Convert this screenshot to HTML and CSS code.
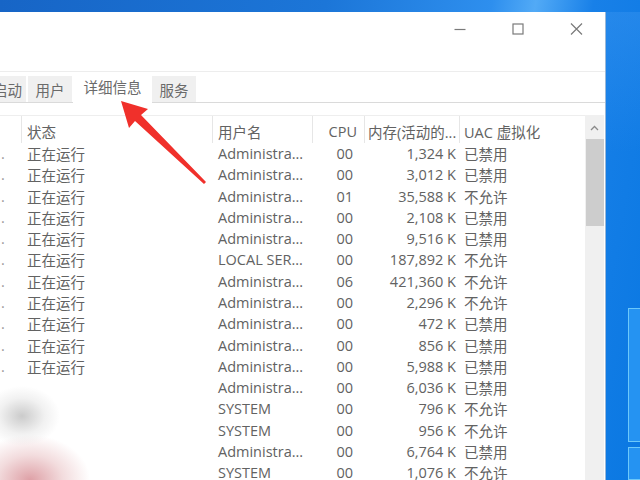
FILE: index.html
```html
<!DOCTYPE html>
<html lang="zh-CN">
<head>
<meta charset="utf-8">
<title>任务管理器 - 详细信息</title>
<link rel="stylesheet" href="styles.css">
</head>
<body>
<div class="desk">
  <div class="window">
    <div class="titlebar">
      <div class="wbtn"><svg width="12" height="12" viewBox="0 0 12 12"><path d="M0.5 6.5H11.5" stroke="#7a7a7a" stroke-width="1.2"/></svg></div>
      <div class="wbtn"><svg width="12" height="12" viewBox="0 0 12 12"><rect x="1" y="1" width="10" height="10" fill="none" stroke="#7a7a7a" stroke-width="1.2"/></svg></div>
      <div class="wbtn"><svg width="13" height="12" viewBox="0 0 13 12"><path d="M1 0.5L12 11.5M12 0.5L1 11.5" stroke="#7a7a7a" stroke-width="1.2"/></svg></div>
    </div>
    <div class="menubar"></div>
    <div class="tabs">
      <div class="tab cut">启动</div>
      <div class="tab">用户</div>
      <div class="tab active">详细信息</div>
      <div class="tab">服务</div>
    </div>
    <div class="content">
      <div class="table">
        <div class="row head">
          <div class="c name"></div>
          <div class="c st">状态</div>
          <div class="c us">用户名</div>
          <div class="c cpu">CPU</div>
          <div class="c mem">内存(活动的...</div>
          <div class="c uac">UAC 虚拟化</div>
        </div>
        <div class="row"><div class="c name">.</div><div class="c st">正在运行</div><div class="c us">Administra...</div><div class="c cpu">00</div><div class="c mem">1,324 K</div><div class="c uac">已禁用</div></div>
        <div class="row"><div class="c name">.</div><div class="c st">正在运行</div><div class="c us">Administra...</div><div class="c cpu">00</div><div class="c mem">3,012 K</div><div class="c uac">已禁用</div></div>
        <div class="row"><div class="c name">.</div><div class="c st">正在运行</div><div class="c us">Administra...</div><div class="c cpu">01</div><div class="c mem">35,588 K</div><div class="c uac">不允许</div></div>
        <div class="row"><div class="c name">.</div><div class="c st">正在运行</div><div class="c us">Administra...</div><div class="c cpu">00</div><div class="c mem">2,108 K</div><div class="c uac">已禁用</div></div>
        <div class="row"><div class="c name">.</div><div class="c st">正在运行</div><div class="c us">Administra...</div><div class="c cpu">00</div><div class="c mem">9,516 K</div><div class="c uac">已禁用</div></div>
        <div class="row"><div class="c name">.</div><div class="c st">正在运行</div><div class="c us">LOCAL SER...</div><div class="c cpu">00</div><div class="c mem">187,892 K</div><div class="c uac">不允许</div></div>
        <div class="row"><div class="c name">.</div><div class="c st">正在运行</div><div class="c us">Administra...</div><div class="c cpu">06</div><div class="c mem">421,360 K</div><div class="c uac">不允许</div></div>
        <div class="row"><div class="c name">.</div><div class="c st">正在运行</div><div class="c us">Administra...</div><div class="c cpu">00</div><div class="c mem">2,296 K</div><div class="c uac">不允许</div></div>
        <div class="row"><div class="c name">.</div><div class="c st">正在运行</div><div class="c us">Administra...</div><div class="c cpu">00</div><div class="c mem">472 K</div><div class="c uac">已禁用</div></div>
        <div class="row"><div class="c name">.</div><div class="c st">正在运行</div><div class="c us">Administra...</div><div class="c cpu">00</div><div class="c mem">856 K</div><div class="c uac">已禁用</div></div>
        <div class="row"><div class="c name">.</div><div class="c st">正在运行</div><div class="c us">Administra...</div><div class="c cpu">00</div><div class="c mem">5,988 K</div><div class="c uac">已禁用</div></div>
        <div class="row"><div class="c name"></div><div class="c st"></div><div class="c us">Administra...</div><div class="c cpu">00</div><div class="c mem">6,036 K</div><div class="c uac">已禁用</div></div>
        <div class="row"><div class="c name"></div><div class="c st"></div><div class="c us">SYSTEM</div><div class="c cpu">00</div><div class="c mem">796 K</div><div class="c uac">不允许</div></div>
        <div class="row"><div class="c name"></div><div class="c st"></div><div class="c us">SYSTEM</div><div class="c cpu">00</div><div class="c mem">956 K</div><div class="c uac">不允许</div></div>
        <div class="row"><div class="c name"></div><div class="c st"></div><div class="c us">Administra...</div><div class="c cpu">00</div><div class="c mem">6,764 K</div><div class="c uac">已禁用</div></div>
        <div class="row"><div class="c name"></div><div class="c st"></div><div class="c us">SYSTEM</div><div class="c cpu">00</div><div class="c mem">1,076 K</div><div class="c uac">不允许</div></div>
      </div>
      <div class="scrollbar">
        <div class="sarrow"><svg width="9" height="6" viewBox="0 0 9 6"><path d="M1 5L4.5 1.5L8 5" fill="none" stroke="#8a8a8a" stroke-width="1.3"/></svg></div>
        <div class="thumb"></div>
      </div>
    </div>
  </div>
  <div class="edge">
    <div class="tile"></div>
    <div class="tile tile2"></div>
  </div>
</div>
<svg class="pointer" width="640" height="480" viewBox="0 0 640 480">
  <polygon points="121,101 148,109 141,115 206,182 204,184 135,121 129,128" fill="#f0302b"/>
</svg>
<div class="blur"></div>
</body>
</html>
```
FILE: styles.css
```css
html, body {
  margin: 0;
  padding: 0;
}
body {
  width: 640px;
  height: 480px;
  overflow: hidden;
  position: relative;
  font-family: "Open Sans", "Noto Sans CJK SC", sans-serif;
  font-size: 14.5px;
  color: #626262;
  background: linear-gradient(100deg, #1765c6 0%, #1c76d8 45%, #2e8fee 68%, #52aaf6 74%, #1880e8 82%, #0a78e2 100%);
}
.desk {
  display: flex;
  padding-top: 12px;
  height: 468px;
}
.window {
  width: 605px;
  height: 468px;
  background: #fff;
  border-right: 1px solid #9ab8d8;
  display: flex;
  flex-direction: column;
  overflow: hidden;
}
.titlebar {
  height: 33px;
  flex-shrink: 0;
  display: flex;
  justify-content: flex-end;
}
.wbtn {
  width: 58px;
  display: flex;
  align-items: center;
  justify-content: center;
  padding-top: 1px;
}
.menubar {
  height: 26px;
  flex-shrink: 0;
}
.tabs {
  height: 30px;
  flex-shrink: 0;
  border-top: 1px solid #ededed;
  border-bottom: 1px solid #dadada;
  display: flex;
  align-items: flex-end;
}
.tab {
  height: 26px;
  width: 44px;
  margin-right: 1px;
  background: #f0f0f0;
  display: flex;
  align-items: center;
  justify-content: center;
  white-space: nowrap;
  color: #6a6a6a;
  padding-top: 1px;
  box-sizing: border-box;
}
.tab.cut {
  width: 26px;
  margin-right: 2px;
  justify-content: flex-end;
  padding-right: 4px;
  overflow: hidden;
}
.tab.active {
  background: #fff;
  width: 79px;
  height: 31px;
  margin-bottom: -1px;
  margin-right: 0;
  padding-bottom: 3px;
}
.content {
  margin-top: 12px;
  display: flex;
  flex: 1;
  min-height: 0;
}
.table {
  width: 585px;
  display: flex;
  flex-direction: column;
  overflow: hidden;
}
.row {
  display: grid;
  grid-template-columns: 22px 191px 100px 52px 95px 125px;
  height: 21.27px;
  flex-shrink: 0;
  align-items: center;
  white-space: nowrap;
}
.row.head {
  height: 28px;
  border-top: 1px solid #eeeeee;
  box-sizing: border-box;
  align-items: stretch;
}
.head .c {
  border-right: 1px solid #e6e6e6;
  display: flex;
  align-items: center;
  padding-top: 3px;
}
.head .cpu {
  justify-content: flex-end;
  padding-right: 7px;
}
.head .mem {
  padding-left: 3px;
  padding-right: 0;
}
.head .uac {
  border-right: none;
}
.c {
  overflow: hidden;
  box-sizing: border-box;
}
.name {
  padding-left: 1px;
  color: #9a9a9a;
}
.st, .us {
  padding-left: 5px;
}
.cpu {
  text-align: right;
  padding-right: 12px;
}
.mem {
  text-align: right;
  padding-right: 4px;
}
.uac {
  padding-left: 4px;
}
.scrollbar {
  width: 19px;
  background: #f0f0f0;
  display: flex;
  flex-direction: column;
  align-items: center;
}
.sarrow {
  height: 22px;
  display: flex;
  align-items: center;
  justify-content: center;
  padding-top: 2px;
}
.thumb {
  width: 18px;
  height: 87px;
  background: #cdcdcd;
}
.edge {
  flex: 1;
  padding-left: 22px;
  display: flex;
  flex-direction: column;
  background: linear-gradient(180deg, rgba(60,150,240,0.4) 0%, rgba(12,128,236,0) 30%);
}
.tile {
  margin-top: 296px;
  height: 139px;
  background: #2593f2;
  border: 1px solid #6cc8fa;
  border-right: none;
}
.tile2 {
  margin-top: 5px;
  height: 33px;
}
.pointer {
  position: absolute;
  left: 0;
  top: 0;
  filter: blur(0.4px);
}
.blur {
  position: absolute;
  left: 0;
  top: 378px;
  width: 130px;
  height: 102px;
  background:
    radial-gradient(ellipse 38px 30px at 22px 38px, rgba(200,200,200,0.95), rgba(220,220,220,0.4) 60%, rgba(255,255,255,0) 100%),
    radial-gradient(ellipse 60px 45px at 30px 102px, rgba(222,160,166,1), rgba(230,185,188,0.5) 55%, rgba(255,255,255,0) 100%),
    radial-gradient(ellipse 130px 100px at 0px 60px, #ffffff 60%, rgba(255,255,255,0) 100%);
}
```
